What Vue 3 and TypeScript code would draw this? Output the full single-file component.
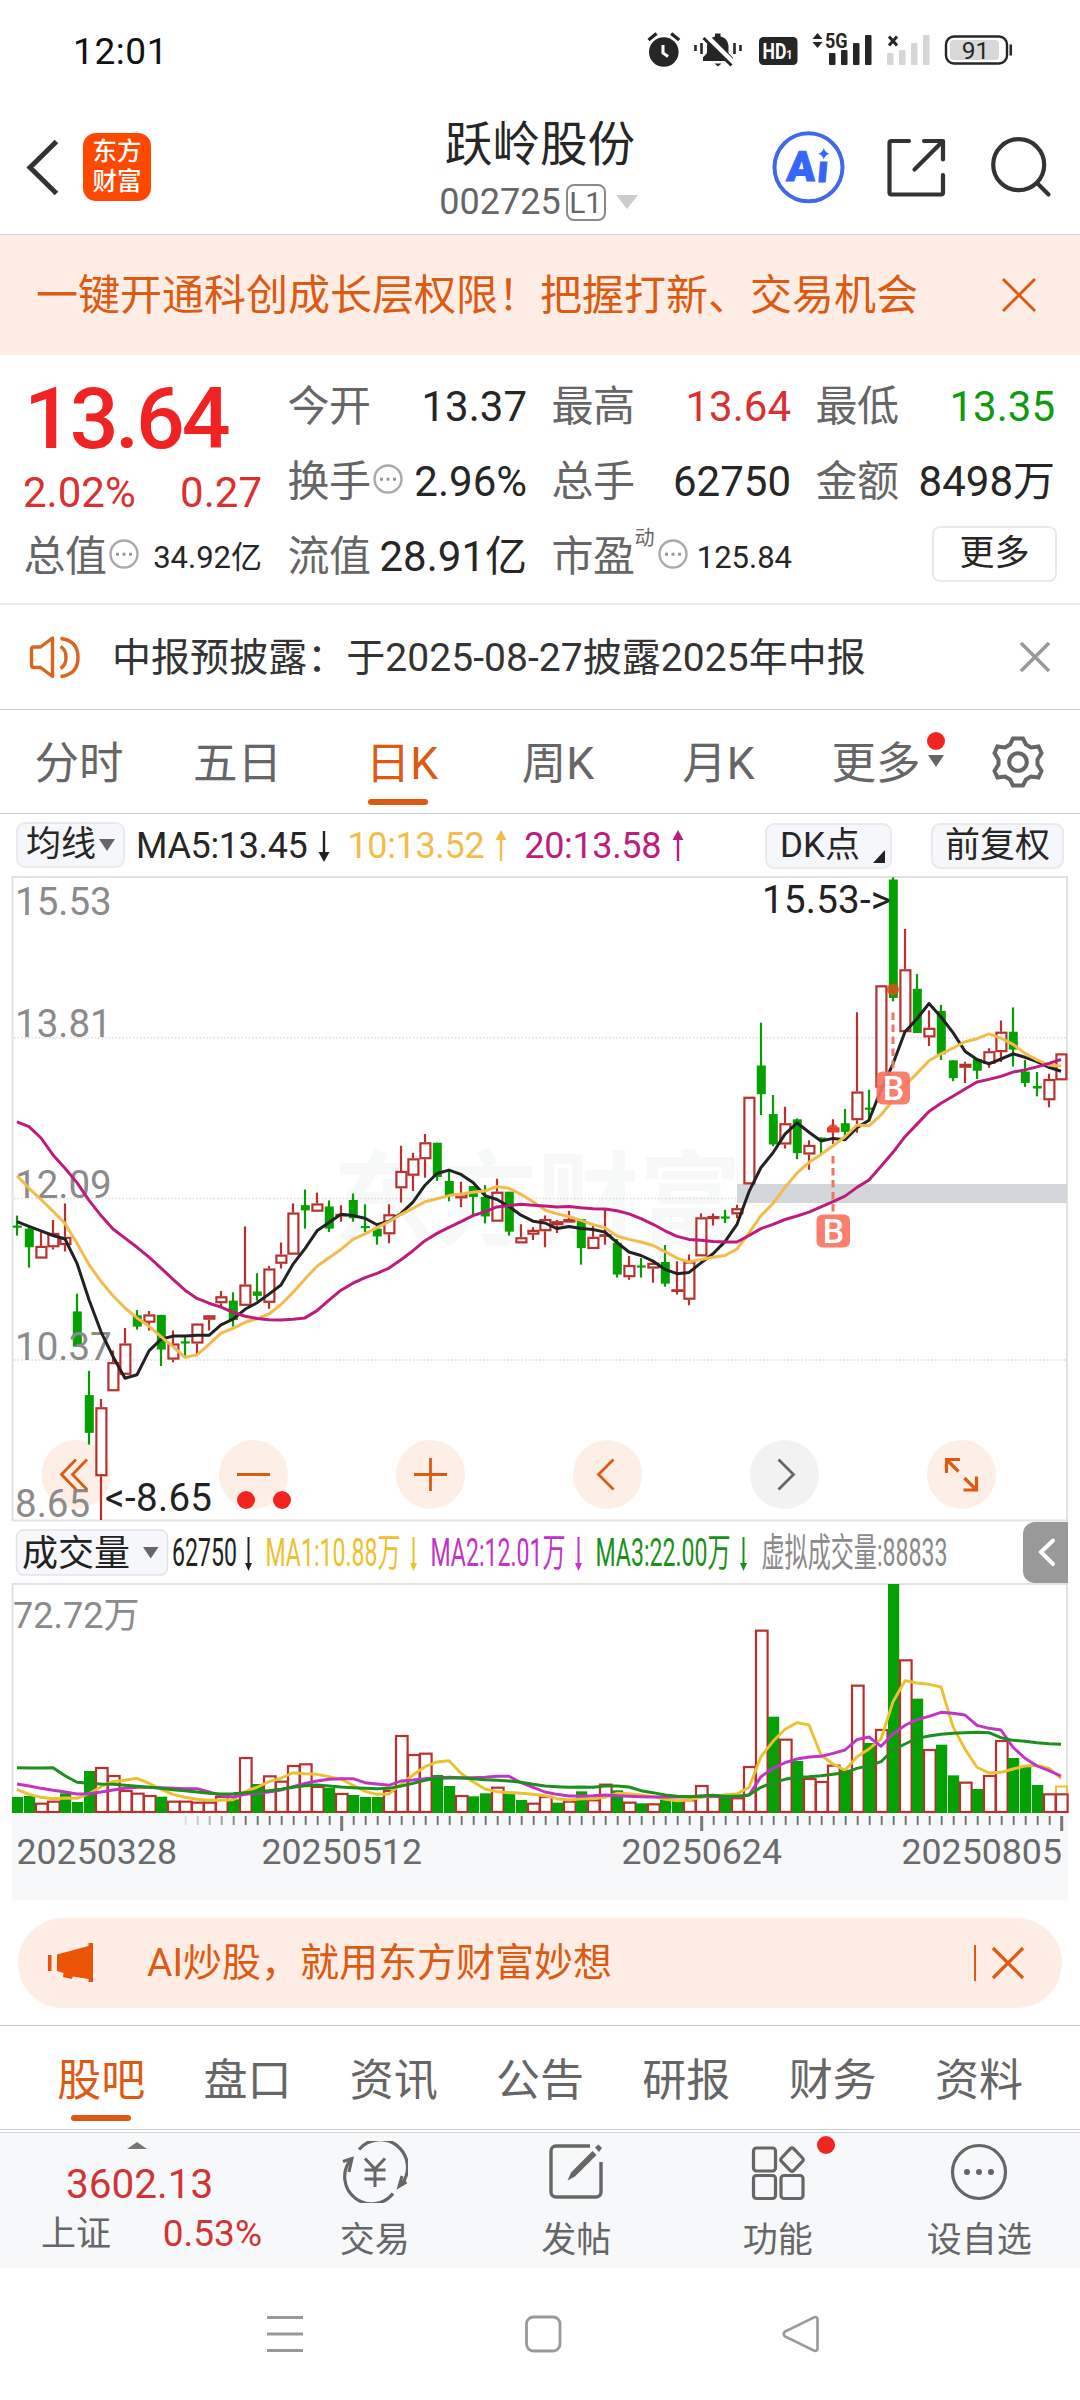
<script setup lang="ts">
type Candle = [up: 0 | 1, high: number, top: number, bottom: number, low: number]

const STEP = 12
const FIRST = 17
const cx = (i: number): number => FIRST + i * STEP

/* Vertical plot units per pixel for the price panel and the volume panel */
const py = (v: number): number => 860 + v / 2.306
const vy = (v: number): number => 1510 + v / 3

const candles: Candle[] = [
  [0, 820, 843, 848, 866], [0, 845, 850, 893, 940], [1, 858, 890, 919, 919], [1, 830, 860, 893, 898],
  [1, 792, 869, 888, 903], [0, 1000, 1041, 1122, 1122], [0, 1178, 1234, 1321, 1348], [1, 1243, 1262, 1421, 1522],
  [1, 1131, 1158, 1225, 1225], [1, 1079, 1115, 1187, 1187], [0, 1038, 1050, 1076, 1083], [1, 1040, 1048, 1067, 1085],
  [0, 1049, 1049, 1129, 1167], [1, 1085, 1115, 1152, 1158], [0, 1096, 1110, 1115, 1148], [1, 1068, 1069, 1115, 1142],
  [1, 1049, 1050, 1060, 1085], [1, 994, 1006, 1022, 1032], [0, 997, 1016, 1061, 1076], [1, 845, 979, 1028, 1028],
  [0, 953, 995, 1005, 1016], [1, 936, 942, 1021, 1035], [1, 882, 910, 931, 942], [1, 792, 813, 910, 910],
  [0, 760, 796, 808, 850], [1, 767, 792, 811, 811], [0, 785, 799, 850, 858], [1, 796, 816, 820, 834],
  [0, 769, 784, 826, 834], [0, 794, 844, 849, 858], [0, 840, 850, 868, 887], [1, 794, 817, 863, 884],
  [1, 659, 717, 757, 790], [1, 675, 688, 728, 763], [1, 632, 651, 690, 733], [0, 652, 652, 731, 740],
  [0, 715, 740, 774, 787], [1, 742, 769, 780, 801], [0, 752, 752, 777, 820], [0, 750, 777, 822, 838],
  [1, 735, 765, 834, 834], [0, 765, 765, 857, 866], [1, 840, 870, 884, 884], [1, 847, 853, 864, 876],
  [1, 820, 828, 856, 893], [1, 830, 833, 842, 860], [1, 809, 828, 836, 836], [0, 828, 828, 895, 933],
  [1, 840, 869, 897, 897], [1, 806, 863, 868, 887], [0, 874, 883, 956, 963], [1, 913, 934, 962, 968],
  [0, 918, 935, 940, 963], [1, 925, 929, 942, 975], [0, 888, 927, 977, 984], [1, 925, 990, 995, 1002],
  [1, 910, 926, 1014, 1027], [1, 815, 824, 914, 914], [1, 815, 821, 828, 843], [0, 807, 822, 827, 837],
  [1, 795, 803, 817, 826], [1, 546, 546, 748, 748], [0, 375, 474, 540, 588], [0, 542, 586, 656, 660],
  [1, 569, 607, 656, 665], [0, 596, 598, 676, 690], [1, 646, 657, 679, 714], [0, 640, 640, 645, 679],
  [1, 598, 617, 628, 655], [0, 574, 607, 627, 640], [1, 351, 534, 600, 629], [0, 530, 571, 576, 603],
  [1, 289, 289, 525, 525], [0, 40, 45, 318, 326], [1, 159, 252, 397, 397], [0, 263, 297, 399, 399],
  [1, 347, 387, 409, 429], [0, 334, 348, 448, 461], [0, 462, 462, 503, 510], [1, 465, 470, 479, 514],
  [0, 459, 459, 486, 505], [1, 434, 441, 470, 479], [1, 370, 396, 443, 466], [0, 340, 396, 437, 476],
  [0, 461, 488, 514, 523], [0, 489, 521, 527, 545], [1, 493, 505, 554, 570], [1, 446, 446, 508, 508],
]

const ma5 = [834, 845, 855, 866, 874, 930, 1014, 1088, 1145, 1195, 1187, 1132, 1105, 1098, 1098, 1096, 1096, 1072, 1059, 1036, 1021, 1001, 980, 932, 896, 855, 836, 817, 820, 826, 841, 833, 815, 789, 750, 723, 715, 725, 744, 774, 783, 799, 819, 833, 837, 850, 845, 850, 852, 858, 882, 904, 912, 925, 944, 954, 951, 929, 908, 880, 840, 765, 709, 675, 632, 606, 628, 648, 642, 645, 617, 600, 530, 470, 396, 366, 331, 362, 398, 441, 460, 470, 459, 447, 455, 465, 478, 487]
const ma10 = [728, 757, 783, 810, 838, 884, 933, 972, 1005, 1033, 1056, 1075, 1099, 1122, 1147, 1141, 1117, 1091, 1080, 1066, 1058, 1047, 1025, 997, 966, 937, 917, 898, 875, 862, 848, 834, 817, 803, 788, 781, 774, 770, 766, 763, 753, 757, 771, 788, 807, 816, 822, 831, 841, 848, 867, 875, 881, 889, 903, 918, 927, 921, 916, 912, 897, 860, 820, 792, 755, 722, 697, 679, 659, 638, 611, 613, 588, 554, 520, 492, 463, 447, 434, 419, 412, 401, 411, 425, 446, 461, 473, 475]
const ma20 = [604, 615, 641, 680, 711, 744, 785, 820, 851, 872, 893, 916, 941, 967, 992, 1011, 1022, 1031, 1043, 1052, 1057, 1060, 1061, 1059, 1056, 1039, 1015, 992, 976, 963, 953, 941, 922, 901, 878, 861, 847, 834, 820, 811, 800, 797, 794, 796, 798, 800, 799, 802, 804, 805, 809, 816, 827, 840, 855, 868, 875, 877, 880, 881, 881, 866, 850, 840, 829, 821, 812, 800, 788, 775, 755, 738, 706, 674, 638, 609, 580, 561, 545, 528, 512, 506, 499, 489, 484, 477, 469, 460]

const volumes = [861, 858, 878, 872, 850, 876, 783, 771, 795, 840, 848, 855, 860, 872, 872, 875, 875, 858, 868, 741, 822, 796, 812, 765, 760, 828, 834, 849, 855, 861, 861, 840, 675, 732, 728, 795, 828, 855, 859, 850, 830, 845, 870, 878, 858, 878, 872, 844, 868, 821, 841, 875, 880, 880, 868, 872, 868, 825, 858, 862, 862, 768, 359, 620, 686, 753, 804, 813, 764, 780, 524, 699, 657, 222, 448, 566, 717, 704, 796, 815, 837, 795, 690, 744, 770, 825, 850, 850]
/* Sessions whose volume bar is drawn solid green */
const solid = new Set([0, 1, 4, 5, 6, 12, 18, 20, 26, 28, 29, 30, 35, 36, 38, 39, 41, 42, 45, 47, 50, 52, 54, 55, 59, 63, 65, 69, 71, 73, 75, 77, 78, 80, 83, 84, 85])

const vol5 = [838, 853, 862, 866, 864, 865, 851, 830, 815, 811, 805, 820, 838, 853, 862, 868, 871, 871, 869, 845, 832, 815, 805, 788, 791, 793, 800, 808, 826, 844, 853, 852, 822, 795, 770, 756, 752, 790, 815, 837, 845, 848, 850, 853, 857, 866, 870, 866, 866, 862, 850, 851, 855, 860, 868, 872, 870, 862, 858, 855, 852, 832, 740, 694, 658, 638, 645, 735, 762, 781, 740, 717, 687, 575, 512, 519, 523, 531, 650, 718, 772, 789, 787, 777, 768, 766, 775, 805]
const vol10 = [822, 828, 835, 841, 846, 852, 851, 846, 840, 835, 832, 832, 833, 835, 836, 836, 846, 856, 861, 853, 850, 846, 840, 830, 820, 813, 808, 806, 806, 818, 822, 826, 813, 810, 806, 803, 802, 803, 803, 802, 799, 799, 818, 832, 846, 853, 858, 858, 857, 855, 857, 859, 860, 861, 861, 861, 860, 859, 858, 860, 860, 855, 800, 775, 758, 747, 741, 739, 730, 720, 689, 681, 709, 672, 646, 629, 619, 607, 610, 615, 646, 655, 660, 712, 745, 768, 782, 798]
const vol20 = [773, 774, 774, 773, 797, 817, 820, 822, 823, 826, 829, 832, 835, 839, 842, 846, 850, 852, 851, 848, 845, 842, 838, 832, 827, 825, 828, 831, 833, 835, 836, 835, 828, 820, 811, 805, 804, 804, 806, 809, 811, 813, 817, 823, 828, 830, 832, 831, 832, 828, 828, 831, 842, 848, 855, 859, 860, 858, 856, 859, 859, 855, 832, 818, 808, 802, 800, 797, 793, 788, 775, 767, 755, 720, 702, 685, 678, 673, 670, 668, 667, 668, 683, 691, 694, 698, 701, 703]

const line = (data: number[], y: (v: number) => number): string =>
  data.map((v, i) => `${cx(i)},${y(v).toFixed(1)}`).join(' ')

const ticks = Array.from({ length: 74 }, (_, k) => ({
  x: 185.7 + k * 12,
  major: k === 13 || k === 43 || k === 73,
  opacity: Math.min(1, 0.2 + k * 0.16),
}))

const priceLabels = [
  { y: 915, t: '15.53' },
  { y: 1037, t: '13.81' },
  { y: 1198, t: '12.09' },
  { y: 1360, t: '10.37' },
  { y: 1517, t: '8.65' },
]

const volumeLegend = [
  { x: 172, t: '62750', c: '#222', arrow: 248.5 },
  { x: 265.5, t: 'MA1:10.88万', c: '#ebc12f', arrow: 413.5 },
  { x: 430.5, t: 'MA2:12.01万', c: '#c034c6', arrow: 578.5 },
  { x: 595.5, t: 'MA3:22.00万', c: '#1c8f1c', arrow: 743.5 },
  { x: 761.5, t: '虚拟成交量:88833', c: '#8a8a8a', arrow: 0 },
]

interface Quote { label: string; value: string; tone?: string; info?: boolean; sup?: string; small?: boolean }
const rows: Quote[][] = [
  [
    { label: '今开', value: '13.37' },
    { label: '最高', value: '13.64', tone: 'red' },
    { label: '最低', value: '13.35', tone: 'green' },
  ],
  [
    { label: '换手', value: '2.96%', info: true },
    { label: '总手', value: '62750' },
    { label: '金额', value: '8498万' },
  ],
]
const thirdRow: Quote[] = [
  { label: '总值', value: '34.92亿', info: true, small: true },
  { label: '流值', value: '28.91亿' },
  { label: '市盈', value: '125.84', info: true, sup: '动', small: true },
]
const periods = ['分时', '五日', '日K', '周K', '月K', '更多']
const sections = ['股吧', '盘口', '资讯', '公告', '研报', '财务', '资料']
</script>

<template>
  <main class="phone">
    <div class="status">
      <span class="clock">12:01</span>
      <svg class="status-icons" width="380" height="60" viewBox="640 20 380 60">
        <g fill="#262626">
          <circle cx="663.8" cy="52" r="14.8" />
          <path d="M648.5 40l8-6.500M679.200 40l-8-6.500" stroke="#262626" stroke-width="3.400" />
          <path d="M663 45v8l5 3.500" fill="none" stroke="#fff" stroke-width="3" />
          <path d="M703 61v-3.500l4-4.500V47c0-6 3.500-9.500 8-10.500V33.500h5.500V36.500c5 1 8 5 8 10.500v6l4.500 5V61zM714.500 63.500h7l-3.500 3z" />
          <path d="M695.500 45v6M701.500 43v11M740.500 45v6M734.500 43v11" stroke="#262626" stroke-width="2.600" />
          <path d="M705 35l29 29" stroke="#fff" stroke-width="6" />
          <path d="M703.500 38l28 27.500" stroke="#262626" stroke-width="3" />
          <rect x="759" y="37" width="38.500" height="28" rx="4.500" />
          <path d="M817.500 33l5 6h-10zM817.500 48l5-6h-10z" />
          <rect x="829" y="53" width="6.500" height="12" rx="1" />
          <rect x="841" y="50" width="6.500" height="15" rx="1" />
          <rect x="853" y="43" width="6.500" height="22" rx="1" />
          <rect x="865" y="35" width="6.500" height="30" rx="1" />
          <path d="M889 36.500l8 9M897 36.500l-8 9" stroke="#262626" stroke-width="3" />
        </g>
        <g fill="#d6d6d6">
          <rect x="887" y="53" width="6.500" height="12" rx="1" />
          <rect x="899" y="50" width="6.500" height="15" rx="1" />
          <rect x="911" y="43" width="6.500" height="22" rx="1" />
          <rect x="923" y="35" width="6.500" height="30" rx="1" />
        </g>
        <text transform="translate(762.5 58.5) scale(.8 1)" font-size="22" font-weight="700" fill="#fff">HD<tspan font-size="13.500">1</tspan></text>
        <text transform="translate(825 47.5) scale(.9 1)" font-size="20" font-weight="700" fill="#262626">5G</text>
        <rect x="946" y="36.500" width="61" height="27" rx="8" fill="#fff" stroke="#262626" stroke-width="2.400" />
        <rect x="950" y="40" width="49" height="20" rx="4" fill="#d8d8d8" />
        <rect x="1009.500" y="44.500" width="2.500" height="11" fill="#262626" />
        <text x="975.500" y="58.500" font-size="24.500" text-anchor="middle" fill="#262626">91</text>
      </svg>
    </div>

    <header class="header">
      <div class="head-left">
        <svg width="40" height="60" viewBox="24 137 40 60"><path d="M56.500 141.500L30 167.500l26.500 26" fill="none" stroke="#333" stroke-width="5" /></svg>
        <div class="logo"><span>东方</span><span>财富</span></div>
      </div>
      <div class="head-title">
        <h1>跃岭股份</h1>
        <div class="code"><span>002725</span><b>L1</b><i class="tri-down pale"></i></div>
      </div>
      <svg class="head-right" width="290" height="80" viewBox="770 127 290 80" fill="none">
        <circle cx="808.500" cy="167.300" r="34" stroke="#4169e6" stroke-width="4" />
        <g fill="#3566fb">
          <text x="0" y="0" font-size="42" font-weight="900" transform="translate(786 180.500) skewX(-4)" stroke="#3566fb" stroke-width="1" textLength="27">A</text>
          <text x="0" y="0" font-size="38" font-weight="900" transform="translate(816.500 181.500) skewX(-5)" stroke="#3566fb" stroke-width="1">ı</text>
          <path d="M823.800 148q1.200 4.500 5.700 5.700q-4.500 1.200-5.700 5.700q-1.200-4.500-5.700-5.700q4.500-1.200 5.700-5.700z" />
        </g>
        <g stroke="#333" stroke-width="4.200" stroke-linecap="round" stroke-linejoin="round">
          <path d="M909 141h-17.500a2 2 0 0 0-2 2v49.500a2 2 0 0 0 2 2h49.500a2 2 0 0 0 2-2V175" />
          <path d="M924 141h19v18.500M942 142l-27.500 27.500" />
          <circle cx="1018.700" cy="164.700" r="25.500" />
          <path d="M1037 183l11.500 11.500" />
        </g>
      </svg>
    </header>

    <section class="banner">
      <span>一键开通科创成长层权限！把握打新、交易机会</span>
      <svg width="36" height="36" viewBox="0 0 36 36"><path d="M2 2l32 32M34 2L2 34" stroke="#dc5a12" stroke-width="3" /></svg>
    </section>

    <section class="quote">
      <div class="price">
        <strong>13.64</strong>
        <div class="change"><span>2.02%</span><span>0.27</span></div>
      </div>
      <div v-for="(row, r) in rows" :key="r" class="cells">
        <div v-for="q in row" :key="q.label" class="cell">
          <span class="label">{{ q.label }}</span>
          <svg v-if="q.info" class="info" width="30" height="30" viewBox="0 0 30 30"><circle cx="15" cy="15" r="13.500" fill="none" stroke="#aaa" stroke-width="2.400" /><path d="M7 13.700h3v3h-3zM13.500 13.700h3v3h-3zM20 13.700h3v3h-3z" fill="#999" /></svg>
          <span class="value" :class="q.tone">{{ q.value }}</span>
        </div>
      </div>
      <div class="third">
        <div v-for="q in thirdRow" :key="q.label" class="cell">
          <span class="label">{{ q.label }}</span>
          <sup v-if="q.sup">{{ q.sup }}</sup>
          <svg v-if="q.info" class="info" width="30" height="30" viewBox="0 0 30 30"><circle cx="15" cy="15" r="13.500" fill="none" stroke="#aaa" stroke-width="2.400" /><path d="M7 13.700h3v3h-3zM13.500 13.700h3v3h-3zM20 13.700h3v3h-3z" fill="#999" /></svg>
          <span class="value" :class="{ small: q.small }">{{ q.value }}</span>
        </div>
        <div class="more-wrap"><button class="more">更多</button></div>
      </div>
    </section>

    <section class="notice">
      <svg width="52" height="46" viewBox="29 633 52 46" fill="none" stroke="#d9651f" stroke-width="3.400">
        <path d="M52.500 637v38.500l-12-9H34q-2.500 0-2.500-2.500v-15.500q0-2.500 2.500-2.500h6.500z" stroke-linejoin="round" />
        <path d="M60.500 645.500q5.500 3 5.500 11t-5.500 11M60.500 637.500q17.500 2 17.500 19t-17.500 19" />
      </svg>
      <span>中报预披露：于2025-08-27披露2025年中报</span>
      <svg width="32" height="32" viewBox="0 0 32 32"><path d="M2 2l28 28M30 2L2 30" stroke="#999" stroke-width="3.400" /></svg>
    </section>

    <nav class="periods">
      <div v-for="p in periods" :key="p" class="period" :class="{ on: p === '日K', last: p === '更多' }">
        <span>{{ p }}</span>
        <template v-if="p === '更多'"><i class="dot"></i><i class="tri-down tiny"></i></template>
      </div>
      <svg width="54" height="56" viewBox="-27 -28 54 56" fill="none" stroke="#666" stroke-width="4">
        <path d="M-5 -23.500H5L8 -17.500L13 -14.500L20.500 -15.500L23.500 -9L19.500 -2.500V2.500L23.500 9L20.500 15.500L13 14.500L8 17.500L5 23.500H-5L-8 17.500L-13 14.500L-20.500 15.500L-23.500 9L-19.500 2.500V-2.500L-23.500 -9L-20.500 -15.500L-13 -14.500L-8 -17.500Z" />
        <circle r="8.800" />
      </svg>
    </nav>

    <section class="ma-row">
      <button class="chip c1">均线<i class="tri-down"></i></button>
      <div class="ma-values">
        <span>MA5:13.45</span>
        <svg width="12" height="34" viewBox="0 0 12 34"><path d="M6 2v24" stroke="#222" stroke-width="2.400" /><path d="M6 33L.5 23h11z" fill="#222" /></svg>
        <span class="yellow">10:13.52</span>
        <svg width="12" height="34" viewBox="0 0 12 34"><path d="M6 8v24" stroke="#f4bc4a" stroke-width="2.400" /><path d="M6 1L.5 11h11z" fill="#f4bc4a" /></svg>
        <span class="purple">20:13.58</span>
        <svg width="12" height="34" viewBox="0 0 12 34"><path d="M6 8v24" stroke="#bc1c7c" stroke-width="2.400" /><path d="M6 1L.5 11h11z" fill="#bc1c7c" /></svg>
      </div>
      <button class="chip c2">DK点<i class="corner"></i></button>
      <button class="chip c3">前复权</button>
    </section>

    <svg class="chart" width="1080" height="1030" viewBox="0 873 1080 1030">
      <text x="537" y="1237" class="mark" text-anchor="middle">东方财富</text>
      <g fill="none" stroke="#e2e2e2" stroke-width="2">
        <path d="M12.500 1520.500V877h1054.500v643.500z" />
        <path d="M12.500 1813V1584h1054.500v229" />
      </g>
      <path d="M14 1037.750H1066M14 1198.500H1066M14 1360H1066" stroke="#dcdcdc" stroke-width="1.400" stroke-dasharray="1.500 2" />
      <rect x="737" y="1184" width="330" height="19" fill="#d3d7db" />

      <g fill="#feefe6">
        <circle cx="76" cy="1474.500" r="34.500" /><circle cx="253.500" cy="1474.500" r="34.500" /><circle cx="430.500" cy="1474.500" r="34.500" />
        <circle cx="607.500" cy="1474.500" r="34.500" /><circle cx="961.500" cy="1474.500" r="34.500" />
      </g>
      <circle cx="784.500" cy="1474.500" r="34.500" fill="#f2f2f2" />

      <g v-for="(c, i) in candles" :key="i">
        <template v-if="c[0]">
          <path :d="`M${cx(i)} ${py(c[1])}V${py(c[2])}M${cx(i)} ${py(c[3])}V${py(c[4])}`" stroke="#b9312f" stroke-width="2.200" />
          <rect :x="cx(i) - 4.600" :y="py(c[2]) + 1" width="10" :height="Math.max(0.6, py(c[3]) - py(c[2]) - 2)" fill="#fff" stroke="#b9312f" stroke-width="2.200" />
        </template>
        <template v-else>
          <path :d="`M${cx(i)} ${py(c[1])}V${py(c[4])}`" stroke="#069c06" stroke-width="2.200" />
          <rect :x="cx(i) - 4.200" :y="py(c[2])" width="9" :height="py(c[3]) - py(c[2])" fill="#04a004" />
        </template>
      </g>
      <g font-size="38.500" fill="#8b8b8b">
        <text v-for="l in priceLabels" :key="l.t" x="15" :y="l.y">{{ l.t }}</text>
      </g>
      <g fill="none" stroke-width="3" stroke-linejoin="round">
        <polyline :points="line(ma5, py)" stroke="#222" />
        <polyline :points="line(ma10, py)" stroke="#f2bb4c" />
        <polyline :points="line(ma20, py)" stroke="#bc1c7c" />
      </g>
      <text x="105" y="1511" font-size="38.500" fill="#222" textLength="107">&lt;-8.65</text>
      <text x="762" y="913" font-size="38.500" fill="#222" textLength="129">15.53-&gt;</text>

      <g stroke="#ee7565" stroke-width="3" stroke-dasharray="7.500 4.500">
        <path d="M833 1156V1213M893 1012.500V1071" />
      </g>
      <path d="M827 1132a6.200 6.200 0 1 1 12 0z" fill="#f0382c" opacity=".85" />
      <circle cx="893" cy="989.500" r="6" fill="#d8501c" opacity=".85" />
      <g fill="#fa7460" fill-opacity=".92">
        <rect x="816.500" y="1214.500" width="33.500" height="33" rx="6" />
        <rect x="876.500" y="1071.500" width="33.500" height="33" rx="6" />
      </g>
      <g fill="#fff" font-size="34" font-weight="500" text-anchor="middle">
        <text x="833.500" y="1243">B</text><text x="893.500" y="1100">B</text>
      </g>

      <g fill="none" stroke="#dc5a12" stroke-width="2.800">
        <path d="M76 1459.500L61.500 1474.500L76 1489.500M87 1459.500L72.500 1474.500L87 1489.500" />
        <path d="M237 1474.500H270M414 1474.500H447M430.500 1458V1491" />
        <path d="M613.500 1459.500L598.500 1474.500L613.500 1489.500" />
        <path d="M778.500 1459.500L793.500 1474.500L778.500 1489.500" stroke="#666" />
        <path d="M946.500 1473V1459.500H960M947 1460L958.500 1471.500M963.500 1490H976.500V1476.500M976 1489.500L964.500 1478" stroke-width="3.200" />
      </g>
      <circle cx="246" cy="1500" r="9" fill="#f02520" /><circle cx="282" cy="1500" r="9" fill="#f02520" />

      <rect x="16.500" y="1530" width="151" height="45" rx="7" fill="#f6f7fa" stroke="#e1e3e8" stroke-width="1.500" />
      <text x="22" y="1566" font-size="36" fill="#222">成交量</text>
      <path d="M143 1547h15.500l-7.750 11.500z" fill="#666" />
      <g font-size="38.500">
        <text v-for="l in volumeLegend" :key="l.t" :transform="`translate(${l.x} 1566) scale(.6 1)`" :fill="l.c">{{ l.t }}</text>
      </g>
      <g v-for="l in volumeLegend.slice(0, 4)" :key="l.arrow" :fill="l.c">
        <rect :x="l.arrow - 1" y="1537" width="2" height="28" /><path :d="`M${l.arrow - 3.500} 1563h7l-3.500 8z`" />
      </g>
      <path d="M1068 1522v61h-33a12 12 0 0 1-12-12v-37a12 12 0 0 1 12-12z" fill="#999" />
      <path d="M1053 1540.500L1041 1552L1053 1564" fill="none" stroke="#fff" stroke-width="4" stroke-linecap="round" />
      <text x="13" y="1628" font-size="36" fill="#8b8b8b">72.72万</text>

      <rect x="12" y="1814" width="1056" height="86" fill="#f7f8fa" />
      <g v-for="(v, i) in volumes" :key="'v' + i">
        <rect v-if="solid.has(i)" :x="cx(i) - 5" :y="vy(v)" width="11.200" :height="1813 - vy(v)" fill="#04a004" />
        <rect v-else :x="cx(i) - 5" :y="vy(v) + 1" width="11.600" :height="1812 - vy(v) - 1" fill="#fff" stroke="#b9312f" stroke-width="2.200" />
      </g>
      <path d="M1056 1793V1786.500H1067V1793" fill="none" stroke="#ebc12f" stroke-width="2" />
      <g fill="none" stroke-width="2.900" stroke-linejoin="round">
        <polyline :points="line(vol5, vy)" stroke="#ebc12f" />
        <polyline :points="line(vol10, vy)" stroke="#c034c6" />
        <polyline :points="line(vol20, vy)" stroke="#1c8f1c" />
      </g>
      <rect v-for="t in ticks" :key="t.x" :x="t.x - (t.major ? 1.500 : 1)" y="1816" :width="t.major ? 3 : 2" :height="t.major ? 15 : 9" fill="#777" :opacity="t.opacity" />
      <g font-size="35.700" fill="#6a6a6a">
        <text x="16.500" y="1864">20250328</text><text x="261.500" y="1864">20250512</text>
        <text x="621.500" y="1864">20250624</text><text x="901.500" y="1864">20250805</text>
      </g>
    </svg>

    <section class="ai">
      <svg width="50" height="44" viewBox="46 1941 50 44" fill="#eb5405">
        <path d="M48 1955h3.500v16H48zM57 1954.500L88.500 1946V1943H93v39h-4.500v-3L73 1976.500l-1.500 2.500-8.500-2 .5-4-6.500-2z" />
      </svg>
      <span>AI炒股，就用东方财富妙想</span>
      <i class="bar"></i>
      <svg class="x" width="34" height="34" viewBox="0 0 34 34"><path d="M2 2l30 30M32 2L2 32" stroke="#dc5a12" stroke-width="3.200" /></svg>
    </section>

    <nav class="sections">
      <div v-for="s in sections" :key="s" :class="{ on: s === '股吧' }">{{ s }}</div>
    </nav>

    <footer class="dock">
      <div class="index">
        <i class="tri-up"></i>
        <b>3602.13</b>
        <div><span>上证</span><em>0.53%</em></div>
      </div>
      <div class="tool">
        <svg width="66" height="62" viewBox="-33 -31 66 62" fill="none" stroke="#666" stroke-width="3.200">
          <path d="M-16 -22.500A27 27 0 0 1 26 13M18 21.500A27 27 0 0 1 -24.500 -12" />
          <path d="M-32 -10.500L-23 -13.500L-26 0M31.500 10L24 14.500L27 4" stroke-width="3" />
          <path d="M-10 -13.500L0 -3L10 -13.500M0 -3V15M-10.500 -2H10.500M-10.500 7H10.500" stroke-width="3" />
        </svg>
        <span>交易</span>
      </div>
      <div class="tool">
        <svg width="66" height="62" viewBox="-33 -31 66 62" fill="none" stroke="#666" stroke-width="3.400">
          <path d="M14 -26H-20a5 5 0 0 0-5 5V20a5 5 0 0 0 5 5H20a5 5 0 0 0 5-5V-10" />
          <path d="M-8.500 8.500L-5 .5L16.500 -21L20.500 -17L-1 4.500ZM19 -24.500L22.500 -27.500L26 -24L23 -20Z" fill="#666" stroke="none" />
        </svg>
        <span>发帖</span>
      </div>
      <div class="tool">
        <svg width="66" height="62" viewBox="-33 -31 66 62" fill="none" stroke="#666" stroke-width="3.200">
          <rect x="-24.500" y="-24" width="22" height="23" rx="3" /><rect x="-24.500" y="3.500" width="22" height="23" rx="3" /><rect x="3" y="3.500" width="22" height="23" rx="3" />
          <path d="M12.300 -23.300a2.500 2.500 0 0 1 3.400 0L24.500 -14a2.500 2.500 0 0 1 0 3.400L15.700 -1.500a2.500 2.500 0 0 1-3.400 0L3.500 -10.600a2.500 2.500 0 0 1 0-3.400z" />
        </svg>
        <span>功能</span>
        <i class="dot badge"></i>
      </div>
      <div class="tool">
        <svg width="66" height="62" viewBox="-33 -31 66 62" fill="none" stroke="#666" stroke-width="3.200">
          <circle cx="0" cy="0" r="26.500" /><g fill="#666" stroke="none"><circle cx="-12" cy="0" r="3" /><circle cx="0" cy="0" r="3" /><circle cx="12" cy="0" r="3" /></g>
        </svg>
        <span>设自选</span>
      </div>
    </footer>

    <div class="navbar">
      <svg width="38" height="38" viewBox="0 0 38 38"><path d="M1 2.500h36M1 19h36M1 35.500h36" stroke="#999" stroke-width="2.800" /></svg>
      <svg width="38" height="38" viewBox="0 0 38 38"><rect x="2.500" y="2" width="33.500" height="34" rx="7" fill="none" stroke="#999" stroke-width="2.800" /></svg>
      <svg width="38" height="38" viewBox="0 0 38 38"><path d="M32 2.500a2.200 2.200 0 0 1 3.500 2v29a2.200 2.200 0 0 1-3.500 2L3 21.500q-2.500-2.500 0-5z" fill="none" stroke="#999" stroke-width="2.600" /></svg>
    </div>
  </main>
</template>

<style>
body { background: #fff; }
</style>

<style scoped>
* { box-sizing: border-box; }
.phone {
  width: 1080px; height: 2400px; overflow: hidden; background: #fff; color: #262626;
  font-family: Roboto, "Noto Sans CJK SC", sans-serif; font-size: 42px; line-height: 1;
  display: flex; flex-direction: column;
}
.phone > * { flex-shrink: 0; }
svg { display: block; flex-shrink: 0; }
i, em { font-style: normal; }
button { font: inherit; color: inherit; padding: 0; margin: 0; }

.status { height: 100px; padding: 20px 60px 20px 73px; display: flex; justify-content: space-between; }
.clock { font-size: 37px; line-height: 63px; letter-spacing: 0.6px; color: #111; }

.header { height: 135px; border-bottom: 1px solid #cdd1d4; display: grid; grid-template-columns: 310px 460px 310px; }
.head-left { display: flex; padding: 33px 0 0 24px; gap: 19px; }
.head-left > svg { margin-top: 4px; }
.logo {
  width: 68px; height: 68px; border-radius: 13px; background: #fe4800; color: #fff; font-weight: 500;
  font-size: 24.5px; display: flex; flex-direction: column; align-items: center; justify-content: center; gap: 4px; line-height: 26px;
}
.head-title { display: flex; flex-direction: column; align-items: center; padding-top: 16px; }
h1 { margin: 0; font-size: 47.6px; line-height: 58px; font-weight: 400; }
.code { display: flex; align-items: center; margin: 9px 3px 0 0; height: 38px; font-size: 36px; color: #666; }
.code b { margin: 0 10px 0 5px; width: 40px; height: 37px; border: 2px solid #8b8b8b; border-radius: 8px; font-weight: 400; font-size: 30px; line-height: 33px; text-align: center; }
.tri-down { display: block; border: 8px solid transparent; border-bottom: 0; border-top: 12px solid #666; }
.tri-down.pale { border-width: 14px 11px 0; border-top-color: #ccc; }
.head-right { margin-top: 27px; }

.banner { height: 120px; background: #fdede4; color: #dc5a12; display: flex; align-items: center; justify-content: space-between; padding: 0 43px 0 36px; }
.banner span { padding-top: 2px; }
.banner svg { margin-top: -1px; }

.quote { height: 250px; border-bottom: 2px solid #ebedee; padding: 14px 25px 0; display: grid; grid-template-columns: 238px 766px; column-gap: 26px; grid-template-rows: 75px 75px 75px; }
.price { grid-row: 1 / span 2; color: #f02222; }
.price strong { display: block; font-weight: 500; font-size: 86px; line-height: 99px; letter-spacing: -3.2px; margin-left: -1px; }
.change { display: flex; justify-content: space-between; line-height: 50px; margin: 0 1px 0 -2px; color: #dc3030; font-size: 42px; }
.cells, .third { display: grid; grid-template-columns: repeat(3, 238px); column-gap: 26px; }
.cells:nth-child(3) { grid-column: 2; }
.third { grid-column: 1 / -1; grid-template-columns: repeat(4, 238px); }
.cell { height: 76px; display: flex; align-items: center; position: relative; }
.label { color: #666; letter-spacing: -0.5px; margin-left: -1.5px; }
.value { margin-left: auto; }
.value.small { font-size: 31px; }
.third .value.small { margin-right: 1px; }
.third .cell:nth-child(3) .value.small { margin-right: -1px; }
.info { margin: -7px 0 0 2px; }
sup { font-size: 20px; color: #666; line-height: 20px; align-self: flex-start; margin: 9px 0 0; }
sup + .info { margin-left: 3px; }
.red { color: #dc3030; }
.green { color: #109a10; }
.more-wrap { display: flex; justify-content: flex-end; padding: 7px 0 0; margin-right: -2px; }
.more { width: 125px; height: 56px; border: 2px solid #e8eaec; border-radius: 8px; background: #fff; font-size: 35px; line-height: 52px; }

.notice { height: 105px; border-bottom: 1px solid #ccc; display: flex; align-items: center; padding: 0 29px; font-size: 39px; color: #333; }
.notice span { margin: 0 auto 0 31px; padding-top: 2px; letter-spacing: 0.05px; }

.periods { height: 104px; border-bottom: 1px solid #ccc; display: grid; grid-template-columns: 158px 159px 170px 142px 179px 136px 136px; font-size: 44.5px; color: #666; }
.period { display: flex; justify-content: center; position: relative; line-height: 109px; }
.periods > svg { margin: 24px 0 0 47px; }
.on { color: #dc5a12; }
.period.on::after { content: ""; position: absolute; width: 60px; height: 6px; border-radius: 3px; background: #dc5a12; left: 51px; top: 89px; }
.dot { position: absolute; width: 18px; height: 18px; border-radius: 50%; background: #f02520; left: 119px; top: 22px; }
.tri-down.tiny { position: absolute; left: 120px; top: 45px; border-width: 12px 8px 0; }

.ma-row { height: 59px; display: flex; padding: 8px 16px 0; font-size: 36px; }
.chip { height: 46px; border: 2px solid #e8eaed; border-radius: 9px; background: #f6f7fa; font-size: 35px; line-height: 42px; display: flex; align-items: center; justify-content: center; position: relative; }
.c1 { width: 109px; gap: 3px; }
.c2 { width: 127px; justify-content: flex-start; padding-left: 13px; margin: 1px 39px 0 auto; }
.c3 { width: 133px; margin-top: 1px; }
.corner { position: absolute; right: 5px; bottom: 4px; border-left: 12px solid transparent; border-bottom: 13px solid #222; }
.ma-values { display: flex; align-items: center; height: 47px; margin-left: 11px; letter-spacing: -0.35px; }
.ma-values svg { margin: 1px 17px 0 11px; }
.yellow { color: #f4bc4a; }
.purple { color: #bc1c7c; }

.chart text { font-family: Roboto, "Noto Sans CJK SC", sans-serif; }
.chart .mark { font-size: 102px; font-weight: 700; fill: #f7f8f8; }

.ai { margin: 15px 18px 0; height: 90px; border-radius: 45px; background: #fdede4; color: #dc5a12; font-size: 39px; display: flex; align-items: center; padding: 0 37px 0 28px; }
.ai span { margin: 0 auto 0 51px; }
.bar { width: 2px; height: 36px; background: #dc5a12; margin-right: 15px; }

.sections { margin-top: 17px; height: 105px; border-top: 1px solid #ccc; border-bottom: 1px solid #ccc; display: grid; grid-template-columns: repeat(7, 146.3px); padding-left: 28px; font-size: 44px; color: #666; text-align: center; line-height: 110px; }
.sections > div { position: relative; }
.sections .on::after { content: ""; position: absolute; width: 60px; height: 6px; border-radius: 3px; background: #dc5a12; left: 43px; top: 89px; }

.dock { margin-top: 2px; height: 136px; border-top: 1px solid #ccd0d3; background: #f6f8fa; display: grid; grid-template-columns: 274px repeat(4, 201.5px); color: #666; font-size: 35px; }
.index { padding: 9px 12px 0 41px; color: #d03434; }
.tri-up { display: block; width: 0; margin-left: 86px; border: 10px solid transparent; border-top: 0; border-bottom: 7px solid #777; }
.index b { display: block; font-weight: 400; font-size: 40.5px; line-height: 48px; margin: 11px 0 0 25px; }
.index div { display: flex; justify-content: space-between; align-items: center; line-height: 48px; margin-top: 1px; }
.index span { color: #666; padding-top: 2px; }
.index em { font-size: 37px; }
.tool { position: relative; display: flex; flex-direction: column; align-items: center; padding-top: 8px; }
.tool span { margin-top: 18px; line-height: 40px; }
.badge { left: 140px; top: 3px; }

.navbar { height: 132px; display: flex; gap: 220px; padding: 47px 0 0 266px; }
</style>
